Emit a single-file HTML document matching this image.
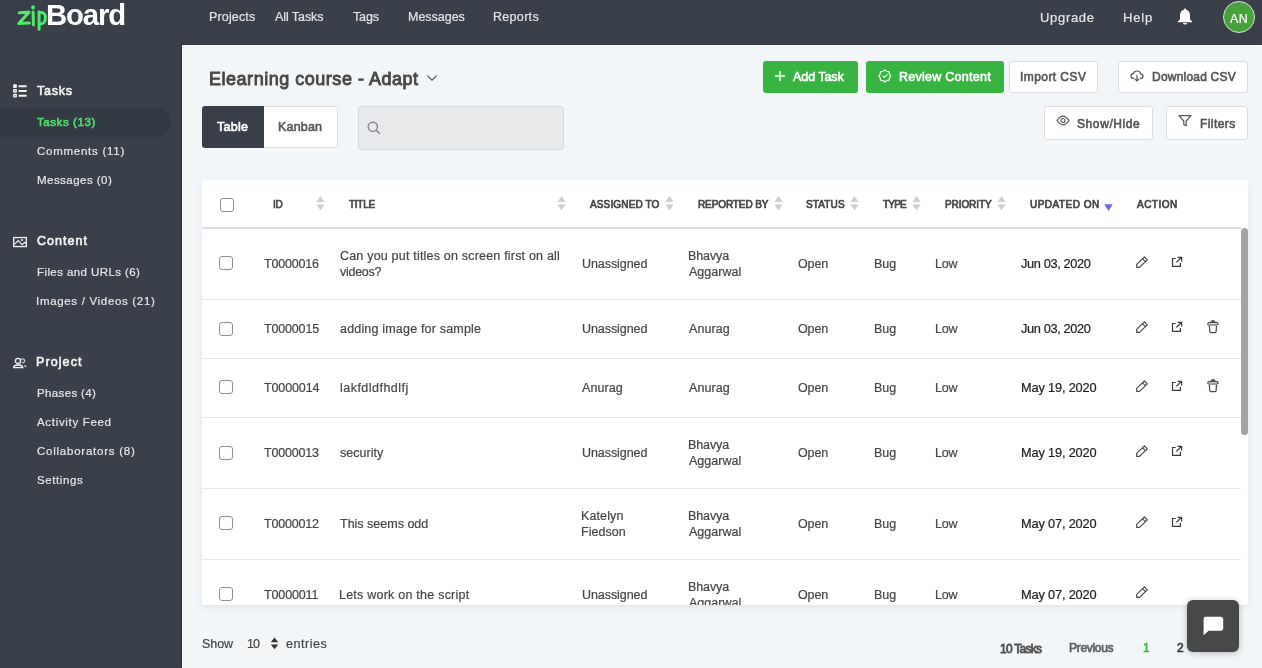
<!DOCTYPE html>
<html><head><meta charset="utf-8">
<style>
*{margin:0;padding:0;box-sizing:border-box}
html,body{width:1262px;height:668px;overflow:hidden}
body{position:relative;background:#3a404a;font-family:"Liberation Sans",sans-serif}
.t{position:absolute;white-space:nowrap;line-height:20px;will-change:transform}
.abs{position:absolute}
#main{position:absolute;left:182px;top:45px;width:1080px;height:623px;background:#f2f6f9;border-top:1px solid #fbfcfd;border-left:1px solid #fbfcfd;box-shadow:-1px -1px 0 #30343d}
.pill{position:absolute;left:0;top:108px;width:171px;height:29px;background:#343a43;border-radius:0 15px 15px 0}
.btn{position:absolute;border-radius:3px}
.gbtn{background:#37b441}
.wbtn{background:#fff;border:1px solid #dcdde0}
#card{position:absolute;left:202px;top:180px;width:1046px;height:425px;background:#fff;border-radius:4px 4px 4px 0;box-shadow:0 2px 6px rgba(0,0,0,0.07);overflow:hidden}
#rowclip{position:absolute;left:202px;top:229px;width:1046px;height:376px;overflow:hidden}
#rowinner{position:absolute;left:-202px;top:-229px;width:1262px;height:668px}
.sep{position:absolute;left:202px;width:1039px;height:1px;background:#e6e6e8}
.cb{position:absolute;width:14px;height:14px;border:1px solid #8f8f8f;border-radius:3px;background:#fff}
.ic{position:absolute}
.sort{position:absolute;top:196px;width:9px;height:15px}
</style></head><body>
<!-- logo -->
<svg class="abs" style="left:14px;top:2px" width="36" height="32" viewBox="0 0 36 32">
<g fill="none" stroke="#4cec6a" stroke-width="3" stroke-linecap="round" stroke-linejoin="round">
<path d="M5.3 10.8 L15 10.2 L4.8 21.6 L15.3 21.1"/>
<path d="M19.1 10 L19.4 23"/>
<path d="M25.1 9.8 L25.1 27.3"/>
<path d="M25.3 10.6 Q31.4 9.4 31.4 15.8 Q31.4 22 26.3 21.8"/>
</g>
<ellipse cx="19.1" cy="5.4" rx="1.9" ry="2.1" fill="#4cec6a"/>
</svg>
<div id="main"></div>
<div class="pill"></div>
<!-- sidebar icons -->
<svg class="abs" style="left:12px;top:83px" width="16" height="16" viewBox="0 0 16 16">
<g fill="#f2f2f2"><rect x="1.1" y="1.3" width="3.8" height="3.8" rx="0.8"/><rect x="1.1" y="6" width="3.8" height="3.8" rx="0.8"/><rect x="1.1" y="10.8" width="3.8" height="3.8" rx="0.8"/></g>
<g fill="#8a8d93"><rect x="2.4" y="7.2" width="1.2" height="1.4"/><rect x="2.4" y="12" width="1.2" height="1.4"/></g>
<path d="M6.6 3.2 H14.6 M6.6 7.9 H14.6 M6.6 12.7 H14.6" stroke="#f2f2f2" stroke-width="2"/></svg>
<svg class="abs" style="left:12px;top:235px" width="16" height="14" viewBox="0 0 16 14">
<g fill="none" stroke="#f2f2f2" stroke-width="1.3"><rect x="1.75" y="2.55" width="12.6" height="9"/><path d="M2.4 9.4 L6.3 5.6 L10.2 9.6 L12.6 7.3 L14.2 8.8" stroke-width="1.2"/></g><circle cx="10" cy="5" r="1.1" fill="#f2f2f2"/></svg>
<svg class="abs" style="left:12px;top:355px" width="16" height="14" viewBox="0 0 16 14">
<g fill="none" stroke="#f2f2f2" stroke-width="1.3"><circle cx="6" cy="5.9" r="2.6"/><path d="M1.6 12.6 Q1.8 10 6.2 10 Q10.6 10 10.8 12.6 Z"/><path d="M9.2 4.6 Q10.2 3.6 11.4 4 Q13.2 4.8 12.4 6.8 Q11.8 8 10 7.6" stroke="#c8c8c8"/></g>
<path d="M12.6 9.8 L15 11.8 H12.4 Z" fill="#f2f2f2"/></svg>

<!-- title chevron -->
<svg class="abs" style="left:426px;top:74px" width="12" height="8" viewBox="0 0 12 8"><path d="M1.4 1.6 L6 6.2 L10.6 1.6" fill="none" stroke="#555" stroke-width="1.3"/></svg>
<!-- toggle -->
<div class="abs" style="left:202px;top:106px;width:136px;height:42px;border-radius:3px;background:#fff;border:1px solid #dcdde0"></div>
<div class="abs" style="left:202px;top:106px;width:62px;height:42px;border-radius:3px 0 0 3px;background:#3a404a"></div>
<!-- search -->
<div class="abs" style="left:358px;top:106px;width:206px;height:44px;border-radius:3px;background:#e8e9eb;border:1px solid #d9dadd"></div>
<svg class="abs" style="left:367px;top:121px" width="14" height="14" viewBox="0 0 14 14"><circle cx="5.8" cy="5.8" r="4.6" fill="none" stroke="#85858f" stroke-width="1.4"/><path d="M9.2 9.2 L12.8 12.8" stroke="#85858f" stroke-width="1.6"/></svg>
<!-- buttons -->
<div class="btn gbtn" style="left:763px;top:61px;width:95px;height:32px"></div>
<div class="btn gbtn" style="left:866px;top:61px;width:138px;height:32px"></div>
<div class="btn wbtn" style="left:1009px;top:61px;width:89px;height:32px"></div>
<div class="btn wbtn" style="left:1118px;top:61px;width:130px;height:32px"></div>
<div class="btn wbtn" style="left:1044px;top:106px;width:109px;height:34px"></div>
<div class="btn wbtn" style="left:1166px;top:106px;width:82px;height:34px"></div>
<svg class="abs" style="left:774px;top:70px" width="12" height="12" viewBox="0 0 12 12"><path d="M6 1 V11 M1 6 H11" stroke="#fff" stroke-width="1.4"/></svg>
<svg class="abs" style="left:877px;top:68px" width="16" height="16" viewBox="0 0 16 16"><path d="M7.80 1.90 L9.71 3.28 L12.04 3.66 L12.42 5.99 L13.80 7.90 L12.42 9.81 L12.04 12.14 L9.71 12.52 L7.80 13.90 L5.89 12.52 L3.56 12.14 L3.18 9.81 L1.80 7.90 L3.18 5.99 L3.56 3.66 L5.89 3.28 Z" fill="none" stroke="#fff" stroke-width="1.2" stroke-linejoin="round"/><path d="M5.6 7.6 L7.4 9.5 L10.5 6.4" fill="none" stroke="#fff" stroke-width="1.2"/></svg>
<svg class="abs" style="left:1130px;top:70px" width="14" height="12" viewBox="0 0 14 12"><path d="M4.2 8.4 H3.4 Q1 8.4 1 6 Q1 3.8 3.3 3.6 Q4 1 7 1 Q10 1 10.6 3.8 Q13 4 13 6.2 Q13 8.4 10.6 8.4 H9.8" fill="none" stroke="#555" stroke-width="1.2"/><path d="M7 5 V11 M4.8 8.8 L7 11 L9.2 8.8" fill="none" stroke="#555" stroke-width="1.2"/></svg>
<svg class="abs" style="left:1056px;top:115px" width="14" height="11" viewBox="0 0 14 11"><path d="M1 5.5 Q4 1.2 7 1.2 Q10 1.2 13 5.5 Q10 9.8 7 9.8 Q4 9.8 1 5.5 Z" fill="none" stroke="#555" stroke-width="1.2"/><circle cx="7" cy="5.5" r="2" fill="none" stroke="#555" stroke-width="1.2"/></svg>
<svg class="abs" style="left:1178px;top:115px" width="14" height="12" viewBox="0 0 14 12"><path d="M1 0.6 H13 L8.2 6 V10.8 L5.8 9.6 V6 Z" fill="none" stroke="#555" stroke-width="1.2" stroke-linejoin="round"/></svg>

<!-- topbar right icons -->
<svg class="abs" style="left:1177px;top:8px" width="16" height="17" viewBox="0 0 16 17"><path d="M8 0.6 Q9.2 0.6 9.2 1.8 Q13 2.8 13 7.4 V11.6 L15.2 13.6 V14.2 H0.8 V13.6 L3 11.6 V7.4 Q3 2.8 6.8 1.8 Q6.8 0.6 8 0.6 Z" fill="#fff"/><path d="M6 15 Q6 16.6 8 16.6 Q10 16.6 10 15 Z" fill="#fff"/></svg>
<div class="abs" style="left:1223px;top:1px;width:32px;height:32px;border-radius:50%;background:#47a23d;border:1px solid #dcdcdc"></div>

<div id="card"></div>
<!-- header -->
<div class="abs" style="left:202px;top:227px;width:1039px;height:2px;background:#dddbe9"></div>
<div class="cb" style="left:220px;top:198px"></div>
<svg class="sort" style="left:316px"><path d="M4.5 0 L8.6 6 H0.4 Z M0.4 8.6 H8.6 L4.5 14.6 Z" fill="#d0d0d0"/></svg>
<svg class="sort" style="left:557px"><path d="M4.5 0 L8.6 6 H0.4 Z M0.4 8.6 H8.6 L4.5 14.6 Z" fill="#d0d0d0"/></svg>
<svg class="sort" style="left:665px"><path d="M4.5 0 L8.6 6 H0.4 Z M0.4 8.6 H8.6 L4.5 14.6 Z" fill="#d0d0d0"/></svg>
<svg class="sort" style="left:774px"><path d="M4.5 0 L8.6 6 H0.4 Z M0.4 8.6 H8.6 L4.5 14.6 Z" fill="#d0d0d0"/></svg>
<svg class="sort" style="left:850px"><path d="M4.5 0 L8.6 6 H0.4 Z M0.4 8.6 H8.6 L4.5 14.6 Z" fill="#d0d0d0"/></svg>
<svg class="sort" style="left:912px"><path d="M4.5 0 L8.6 6 H0.4 Z M0.4 8.6 H8.6 L4.5 14.6 Z" fill="#d0d0d0"/></svg>
<svg class="sort" style="left:997px"><path d="M4.5 0 L8.6 6 H0.4 Z M0.4 8.6 H8.6 L4.5 14.6 Z" fill="#d0d0d0"/></svg>
<svg class="abs" style="left:1104px;top:203px" width="9" height="9" viewBox="0 0 9 9"><path d="M0.3 1.2 H8.7 L4.5 8.1 Z" fill="#6b68e0"/></svg>
<div id="rowclip"><div id="rowinner">
<div class="cb" style="left:219px;top:256px"></div>
<div class="sep" style="top:299px"></div>
<svg class="ic" style="left:1130px;top:254px" width="95" height="20" viewBox="0 0 95 20"><path d="M6.7 13.3 L6.7 10.4 L14.4 2.9 L17.3 5.8 L9.5 13.3 Z M12.6 4.8 L15.2 7.4" fill="none" stroke="#444" stroke-width="1.15" stroke-linejoin="round"/><path d="M45.7 4.5 H42.5 V12.3 H50.4 V9 M47.5 3.3 H51.6 V7.5 M51.4 3.5 L46.3 8.4" fill="none" stroke="#3a3a3a" stroke-width="1.2"/></svg>
<div class="cb" style="left:219px;top:322px"></div>
<div class="sep" style="top:358px"></div>
<svg class="ic" style="left:1130px;top:319px" width="95" height="20" viewBox="0 0 95 20"><path d="M6.7 13.3 L6.7 10.4 L14.4 2.9 L17.3 5.8 L9.5 13.3 Z M12.6 4.8 L15.2 7.4" fill="none" stroke="#444" stroke-width="1.15" stroke-linejoin="round"/><path d="M45.7 4.5 H42.5 V12.3 H50.4 V9 M47.5 3.3 H51.6 V7.5 M51.4 3.5 L46.3 8.4" fill="none" stroke="#3a3a3a" stroke-width="1.2"/><path d="M80.3 3.6 Q80.6 0.9 83 0.9 Q85.4 0.9 85.7 3.6 Z" fill="#5a5a5a"/><rect x="77.8" y="3.7" width="10.3" height="2.3" rx="1.1" fill="#f4f4f4" stroke="#4a4a4a" stroke-width="1.2"/><path d="M79.3 6.6 L79.9 13 Q80 13.6 80.6 13.6 H85.4 Q86 13.6 86.1 13 L86.5 6.6" fill="none" stroke="#4a4a4a" stroke-width="1.2"/></svg>
<div class="cb" style="left:219px;top:380px"></div>
<div class="sep" style="top:417px"></div>
<svg class="ic" style="left:1130px;top:378px" width="95" height="20" viewBox="0 0 95 20"><path d="M6.7 13.3 L6.7 10.4 L14.4 2.9 L17.3 5.8 L9.5 13.3 Z M12.6 4.8 L15.2 7.4" fill="none" stroke="#444" stroke-width="1.15" stroke-linejoin="round"/><path d="M45.7 4.5 H42.5 V12.3 H50.4 V9 M47.5 3.3 H51.6 V7.5 M51.4 3.5 L46.3 8.4" fill="none" stroke="#3a3a3a" stroke-width="1.2"/><path d="M80.3 3.6 Q80.6 0.9 83 0.9 Q85.4 0.9 85.7 3.6 Z" fill="#5a5a5a"/><rect x="77.8" y="3.7" width="10.3" height="2.3" rx="1.1" fill="#f4f4f4" stroke="#4a4a4a" stroke-width="1.2"/><path d="M79.3 6.6 L79.9 13 Q80 13.6 80.6 13.6 H85.4 Q86 13.6 86.1 13 L86.5 6.6" fill="none" stroke="#4a4a4a" stroke-width="1.2"/></svg>
<div class="cb" style="left:219px;top:446px"></div>
<div class="sep" style="top:488px"></div>
<svg class="ic" style="left:1130px;top:443px" width="95" height="20" viewBox="0 0 95 20"><path d="M6.7 13.3 L6.7 10.4 L14.4 2.9 L17.3 5.8 L9.5 13.3 Z M12.6 4.8 L15.2 7.4" fill="none" stroke="#444" stroke-width="1.15" stroke-linejoin="round"/><path d="M45.7 4.5 H42.5 V12.3 H50.4 V9 M47.5 3.3 H51.6 V7.5 M51.4 3.5 L46.3 8.4" fill="none" stroke="#3a3a3a" stroke-width="1.2"/></svg>
<div class="cb" style="left:219px;top:516px"></div>
<div class="sep" style="top:559px"></div>
<svg class="ic" style="left:1130px;top:514px" width="95" height="20" viewBox="0 0 95 20"><path d="M6.7 13.3 L6.7 10.4 L14.4 2.9 L17.3 5.8 L9.5 13.3 Z M12.6 4.8 L15.2 7.4" fill="none" stroke="#444" stroke-width="1.15" stroke-linejoin="round"/><path d="M45.7 4.5 H42.5 V12.3 H50.4 V9 M47.5 3.3 H51.6 V7.5 M51.4 3.5 L46.3 8.4" fill="none" stroke="#3a3a3a" stroke-width="1.2"/></svg>
<div class="cb" style="left:219px;top:587px"></div>
<svg class="ic" style="left:1130px;top:584px" width="95" height="20" viewBox="0 0 95 20"><path d="M6.7 13.3 L6.7 10.4 L14.4 2.9 L17.3 5.8 L9.5 13.3 Z M12.6 4.8 L15.2 7.4" fill="none" stroke="#444" stroke-width="1.15" stroke-linejoin="round"/></svg>
<div class="t" style="left:264.30px;top:254.00px;font-size:12.5px;font-weight:400;-webkit-text-stroke:0.20px #454545;color:#454545;letter-spacing:-0.192px">T0000016</div>
<div class="t" style="left:340.40px;top:246.00px;font-size:12.5px;font-weight:400;-webkit-text-stroke:0.20px #454545;color:#454545;letter-spacing:0.197px">Can you put titles on screen first on all</div>
<div class="t" style="left:340.40px;top:262.00px;font-size:12.5px;font-weight:400;-webkit-text-stroke:0.20px #454545;color:#454545;letter-spacing:-0.273px">videos?</div>
<div class="t" style="left:581.50px;top:254.00px;font-size:12.5px;font-weight:400;-webkit-text-stroke:0.20px #454545;color:#454545;letter-spacing:-0.063px">Unassigned</div>
<div class="t" style="left:688.30px;top:246.00px;font-size:12.5px;font-weight:400;-webkit-text-stroke:0.20px #454545;color:#454545;letter-spacing:-0.108px">Bhavya</div>
<div class="t" style="left:689.30px;top:262.00px;font-size:12.5px;font-weight:400;-webkit-text-stroke:0.20px #454545;color:#454545;letter-spacing:0.024px">Aggarwal</div>
<div class="t" style="left:798.40px;top:254.00px;font-size:12.5px;font-weight:400;-webkit-text-stroke:0.20px #454545;color:#454545;letter-spacing:-0.109px">Open</div>
<div class="t" style="left:873.60px;top:254.00px;font-size:12.5px;font-weight:400;-webkit-text-stroke:0.20px #454545;color:#454545;letter-spacing:-0.045px">Bug</div>
<div class="t" style="left:935.40px;top:254.00px;font-size:12.5px;font-weight:400;-webkit-text-stroke:0.20px #454545;color:#454545;letter-spacing:-0.252px">Low</div>
<div class="t" style="left:1020.50px;top:254.00px;font-size:12.8px;font-weight:400;-webkit-text-stroke:0.20px #222222;color:#222222;letter-spacing:-0.380px">Jun 03, 2020</div>
<div class="t" style="left:264.30px;top:319.00px;font-size:12.5px;font-weight:400;-webkit-text-stroke:0.20px #454545;color:#454545;letter-spacing:-0.164px">T0000015</div>
<div class="t" style="left:340.40px;top:319.00px;font-size:12.5px;font-weight:400;-webkit-text-stroke:0.20px #454545;color:#454545;letter-spacing:0.185px">adding image for sample</div>
<div class="t" style="left:581.50px;top:319.00px;font-size:12.5px;font-weight:400;-webkit-text-stroke:0.20px #454545;color:#454545;letter-spacing:-0.063px">Unassigned</div>
<div class="t" style="left:689.30px;top:319.00px;font-size:12.5px;font-weight:400;-webkit-text-stroke:0.20px #454545;color:#454545;letter-spacing:0.069px">Anurag</div>
<div class="t" style="left:798.40px;top:319.00px;font-size:12.5px;font-weight:400;-webkit-text-stroke:0.20px #454545;color:#454545;letter-spacing:-0.109px">Open</div>
<div class="t" style="left:873.60px;top:319.00px;font-size:12.5px;font-weight:400;-webkit-text-stroke:0.20px #454545;color:#454545;letter-spacing:-0.045px">Bug</div>
<div class="t" style="left:935.40px;top:319.00px;font-size:12.5px;font-weight:400;-webkit-text-stroke:0.20px #454545;color:#454545;letter-spacing:-0.252px">Low</div>
<div class="t" style="left:1020.50px;top:319.00px;font-size:12.8px;font-weight:400;-webkit-text-stroke:0.20px #222222;color:#222222;letter-spacing:-0.380px">Jun 03, 2020</div>
<div class="t" style="left:264.30px;top:378.00px;font-size:12.5px;font-weight:400;-webkit-text-stroke:0.20px #454545;color:#454545;letter-spacing:-0.121px">T0000014</div>
<div class="t" style="left:340.40px;top:378.00px;font-size:12.5px;font-weight:400;-webkit-text-stroke:0.20px #454545;color:#454545;letter-spacing:0.478px">lakfdldfhdlfj</div>
<div class="t" style="left:581.50px;top:378.00px;font-size:12.5px;font-weight:400;-webkit-text-stroke:0.20px #454545;color:#454545;letter-spacing:0.069px">Anurag</div>
<div class="t" style="left:689.30px;top:378.00px;font-size:12.5px;font-weight:400;-webkit-text-stroke:0.20px #454545;color:#454545;letter-spacing:0.069px">Anurag</div>
<div class="t" style="left:798.40px;top:378.00px;font-size:12.5px;font-weight:400;-webkit-text-stroke:0.20px #454545;color:#454545;letter-spacing:-0.109px">Open</div>
<div class="t" style="left:873.60px;top:378.00px;font-size:12.5px;font-weight:400;-webkit-text-stroke:0.20px #454545;color:#454545;letter-spacing:-0.045px">Bug</div>
<div class="t" style="left:935.40px;top:378.00px;font-size:12.5px;font-weight:400;-webkit-text-stroke:0.20px #454545;color:#454545;letter-spacing:-0.252px">Low</div>
<div class="t" style="left:1020.50px;top:378.00px;font-size:12.8px;font-weight:400;-webkit-text-stroke:0.20px #222222;color:#222222;letter-spacing:-0.175px">May 19, 2020</div>
<div class="t" style="left:264.30px;top:443.00px;font-size:12.5px;font-weight:400;-webkit-text-stroke:0.20px #454545;color:#454545;letter-spacing:-0.192px">T0000013</div>
<div class="t" style="left:340.40px;top:443.00px;font-size:12.5px;font-weight:400;-webkit-text-stroke:0.20px #454545;color:#454545;letter-spacing:0.026px">security</div>
<div class="t" style="left:581.50px;top:443.00px;font-size:12.5px;font-weight:400;-webkit-text-stroke:0.20px #454545;color:#454545;letter-spacing:-0.063px">Unassigned</div>
<div class="t" style="left:688.30px;top:435.00px;font-size:12.5px;font-weight:400;-webkit-text-stroke:0.20px #454545;color:#454545;letter-spacing:-0.108px">Bhavya</div>
<div class="t" style="left:689.30px;top:451.00px;font-size:12.5px;font-weight:400;-webkit-text-stroke:0.20px #454545;color:#454545;letter-spacing:0.024px">Aggarwal</div>
<div class="t" style="left:798.40px;top:443.00px;font-size:12.5px;font-weight:400;-webkit-text-stroke:0.20px #454545;color:#454545;letter-spacing:-0.109px">Open</div>
<div class="t" style="left:873.60px;top:443.00px;font-size:12.5px;font-weight:400;-webkit-text-stroke:0.20px #454545;color:#454545;letter-spacing:-0.045px">Bug</div>
<div class="t" style="left:935.40px;top:443.00px;font-size:12.5px;font-weight:400;-webkit-text-stroke:0.20px #454545;color:#454545;letter-spacing:-0.252px">Low</div>
<div class="t" style="left:1020.50px;top:443.00px;font-size:12.8px;font-weight:400;-webkit-text-stroke:0.20px #222222;color:#222222;letter-spacing:-0.175px">May 19, 2020</div>
<div class="t" style="left:264.30px;top:514.00px;font-size:12.5px;font-weight:400;-webkit-text-stroke:0.20px #454545;color:#454545;letter-spacing:-0.192px">T0000012</div>
<div class="t" style="left:340.40px;top:514.00px;font-size:12.5px;font-weight:400;-webkit-text-stroke:0.20px #454545;color:#454545;letter-spacing:0.001px">This seems odd</div>
<div class="t" style="left:580.50px;top:506.00px;font-size:12.5px;font-weight:400;-webkit-text-stroke:0.20px #454545;color:#454545;letter-spacing:0.110px">Katelyn</div>
<div class="t" style="left:580.50px;top:522.00px;font-size:12.5px;font-weight:400;-webkit-text-stroke:0.20px #454545;color:#454545;letter-spacing:0.030px">Fiedson</div>
<div class="t" style="left:688.30px;top:506.00px;font-size:12.5px;font-weight:400;-webkit-text-stroke:0.20px #454545;color:#454545;letter-spacing:-0.108px">Bhavya</div>
<div class="t" style="left:689.30px;top:522.00px;font-size:12.5px;font-weight:400;-webkit-text-stroke:0.20px #454545;color:#454545;letter-spacing:0.024px">Aggarwal</div>
<div class="t" style="left:798.40px;top:514.00px;font-size:12.5px;font-weight:400;-webkit-text-stroke:0.20px #454545;color:#454545;letter-spacing:-0.109px">Open</div>
<div class="t" style="left:873.60px;top:514.00px;font-size:12.5px;font-weight:400;-webkit-text-stroke:0.20px #454545;color:#454545;letter-spacing:-0.045px">Bug</div>
<div class="t" style="left:935.40px;top:514.00px;font-size:12.5px;font-weight:400;-webkit-text-stroke:0.20px #454545;color:#454545;letter-spacing:-0.252px">Low</div>
<div class="t" style="left:1020.50px;top:514.00px;font-size:12.8px;font-weight:400;-webkit-text-stroke:0.20px #222222;color:#222222;letter-spacing:-0.175px">May 07, 2020</div>
<div class="t" style="left:264.30px;top:585.00px;font-size:12.5px;font-weight:400;-webkit-text-stroke:0.20px #454545;color:#454545;letter-spacing:-0.131px">T0000011</div>
<div class="t" style="left:339.40px;top:585.00px;font-size:12.5px;font-weight:400;-webkit-text-stroke:0.20px #454545;color:#454545;letter-spacing:0.233px">Lets work on the script</div>
<div class="t" style="left:581.50px;top:585.00px;font-size:12.5px;font-weight:400;-webkit-text-stroke:0.20px #454545;color:#454545;letter-spacing:-0.063px">Unassigned</div>
<div class="t" style="left:688.30px;top:577.00px;font-size:12.5px;font-weight:400;-webkit-text-stroke:0.20px #454545;color:#454545;letter-spacing:-0.108px">Bhavya</div>
<div class="t" style="left:689.30px;top:593.00px;font-size:12.5px;font-weight:400;-webkit-text-stroke:0.20px #454545;color:#454545;letter-spacing:0.024px">Aggarwal</div>
<div class="t" style="left:798.40px;top:585.00px;font-size:12.5px;font-weight:400;-webkit-text-stroke:0.20px #454545;color:#454545;letter-spacing:-0.109px">Open</div>
<div class="t" style="left:873.60px;top:585.00px;font-size:12.5px;font-weight:400;-webkit-text-stroke:0.20px #454545;color:#454545;letter-spacing:-0.045px">Bug</div>
<div class="t" style="left:935.40px;top:585.00px;font-size:12.5px;font-weight:400;-webkit-text-stroke:0.20px #454545;color:#454545;letter-spacing:-0.252px">Low</div>
<div class="t" style="left:1020.50px;top:585.00px;font-size:12.8px;font-weight:400;-webkit-text-stroke:0.20px #222222;color:#222222;letter-spacing:-0.175px">May 07, 2020</div>
</div></div>
<!-- scrollbar -->
<div class="abs" style="left:1241px;top:228px;width:7px;height:207px;border-radius:4px;background:#a3a3a3"></div>

<!-- footer -->
<div class="abs" style="left:238px;top:633px;width:44px;height:21px;border-radius:4px;background:#f4f5f7"></div>
<svg class="abs" style="left:270px;top:637px" width="9" height="13" viewBox="0 0 9 13"><path d="M4.5 0.5 L8.2 5.2 H0.8 Z M0.8 7.4 H8.2 L4.5 12.2 Z" fill="#333"/></svg>
<div class="t" style="left:208.50px;top:7.00px;font-size:12.5px;font-weight:400;-webkit-text-stroke:0.20px #e4e5e7;color:#e4e5e7;letter-spacing:0.157px">Projects</div>
<div class="t" style="left:274.50px;top:7.00px;font-size:12.5px;font-weight:400;-webkit-text-stroke:0.20px #e4e5e7;color:#e4e5e7;letter-spacing:-0.071px">All Tasks</div>
<div class="t" style="left:353.00px;top:7.00px;font-size:12.5px;font-weight:400;-webkit-text-stroke:0.20px #e4e5e7;color:#e4e5e7;letter-spacing:-0.151px">Tags</div>
<div class="t" style="left:407.50px;top:7.00px;font-size:12.5px;font-weight:400;-webkit-text-stroke:0.20px #e4e5e7;color:#e4e5e7;letter-spacing:-0.017px">Messages</div>
<div class="t" style="left:492.80px;top:7.00px;font-size:12.5px;font-weight:400;-webkit-text-stroke:0.20px #e4e5e7;color:#e4e5e7;letter-spacing:0.314px">Reports</div>
<div class="t" style="left:1039.70px;top:8.00px;font-size:13px;font-weight:400;-webkit-text-stroke:0.20px #e4e5e7;color:#e4e5e7;letter-spacing:0.677px">Upgrade</div>
<div class="t" style="left:1122.75px;top:8.00px;font-size:13px;font-weight:400;-webkit-text-stroke:0.20px #e4e5e7;color:#e4e5e7;letter-spacing:0.831px">Help</div>
<div class="t" style="left:1230.00px;top:9.00px;font-size:12.5px;font-weight:400;-webkit-text-stroke:0.20px #ffffff;color:#ffffff;letter-spacing:0.463px">AN</div>
<div class="t" style="left:46.20px;top:5.00px;font-size:29.3px;font-weight:700;color:#ffffff;letter-spacing:-1.112px">Board</div>
<div class="t" style="left:37.30px;top:81.00px;font-size:12.5px;font-weight:400;-webkit-text-stroke:0.60px #f4f4f4;color:#f4f4f4;letter-spacing:0.775px">Tasks</div>
<div class="t" style="left:37.30px;top:112.00px;font-size:11.5px;font-weight:400;-webkit-text-stroke:0.60px #4fe06d;color:#4fe06d;letter-spacing:0.576px">Tasks (13)</div>
<div class="t" style="left:37.00px;top:141.00px;font-size:11.5px;font-weight:400;-webkit-text-stroke:0.20px #e6e7e9;color:#e6e7e9;letter-spacing:0.745px">Comments (11)</div>
<div class="t" style="left:37.00px;top:170.00px;font-size:11.5px;font-weight:400;-webkit-text-stroke:0.20px #e6e7e9;color:#e6e7e9;letter-spacing:0.461px">Messages (0)</div>
<div class="t" style="left:37.30px;top:231.00px;font-size:12.5px;font-weight:400;-webkit-text-stroke:0.60px #f4f4f4;color:#f4f4f4;letter-spacing:1.015px">Content</div>
<div class="t" style="left:37.00px;top:262.00px;font-size:11.5px;font-weight:400;-webkit-text-stroke:0.20px #e6e7e9;color:#e6e7e9;letter-spacing:0.410px">Files and URLs (6)</div>
<div class="t" style="left:36.00px;top:291.00px;font-size:11.5px;font-weight:400;-webkit-text-stroke:0.20px #e6e7e9;color:#e6e7e9;letter-spacing:0.681px">Images / Videos (21)</div>
<div class="t" style="left:36.30px;top:352.00px;font-size:12.5px;font-weight:400;-webkit-text-stroke:0.60px #f4f4f4;color:#f4f4f4;letter-spacing:1.095px">Project</div>
<div class="t" style="left:37.00px;top:383.00px;font-size:11.5px;font-weight:400;-webkit-text-stroke:0.20px #e6e7e9;color:#e6e7e9;letter-spacing:0.358px">Phases (4)</div>
<div class="t" style="left:37.00px;top:412.00px;font-size:11.5px;font-weight:400;-webkit-text-stroke:0.20px #e6e7e9;color:#e6e7e9;letter-spacing:0.681px">Activity Feed</div>
<div class="t" style="left:37.00px;top:441.00px;font-size:11.5px;font-weight:400;-webkit-text-stroke:0.20px #e6e7e9;color:#e6e7e9;letter-spacing:0.762px">Collaborators (8)</div>
<div class="t" style="left:37.00px;top:470.00px;font-size:11.5px;font-weight:400;-webkit-text-stroke:0.20px #e6e7e9;color:#e6e7e9;letter-spacing:0.600px">Settings</div>
<div class="t" style="left:209.35px;top:69.00px;font-size:18px;font-weight:400;-webkit-text-stroke:0.90px #4a4846;color:#4a4846;letter-spacing:0.521px">Elearning course - Adapt</div>
<div class="t" style="left:217.30px;top:117.00px;font-size:12.5px;font-weight:400;-webkit-text-stroke:0.60px #ffffff;color:#ffffff;letter-spacing:0.292px">Table</div>
<div class="t" style="left:278.10px;top:117.00px;font-size:12.5px;font-weight:400;-webkit-text-stroke:0.60px #58585a;color:#58585a;letter-spacing:0.171px">Kanban</div>
<div class="t" style="left:793.30px;top:67.00px;font-size:12.5px;font-weight:400;-webkit-text-stroke:0.60px #ffffff;color:#ffffff;letter-spacing:-0.067px">Add Task</div>
<div class="t" style="left:899.30px;top:67.00px;font-size:12.5px;font-weight:400;-webkit-text-stroke:0.60px #ffffff;color:#ffffff;letter-spacing:0.264px">Review Content</div>
<div class="t" style="left:1020.10px;top:67.00px;font-size:12px;font-weight:400;-webkit-text-stroke:0.60px #555555;color:#555555;letter-spacing:0.432px">Import CSV</div>
<div class="t" style="left:1151.80px;top:67.00px;font-size:12px;font-weight:400;-webkit-text-stroke:0.60px #555555;color:#555555;letter-spacing:0.212px">Download CSV</div>
<div class="t" style="left:1077.10px;top:114.00px;font-size:12px;font-weight:400;-webkit-text-stroke:0.60px #555555;color:#555555;letter-spacing:0.593px">Show/Hide</div>
<div class="t" style="left:1200.00px;top:114.00px;font-size:12px;font-weight:400;-webkit-text-stroke:0.60px #555555;color:#555555;letter-spacing:0.422px">Filters</div>
<div class="t" style="left:273.05px;top:195.00px;font-size:10px;font-weight:400;-webkit-text-stroke:0.70px #474747;color:#474747;letter-spacing:-0.378px">ID</div>
<div class="t" style="left:349.15px;top:195.00px;font-size:10px;font-weight:400;-webkit-text-stroke:0.70px #474747;color:#474747;letter-spacing:-0.264px">TITLE</div>
<div class="t" style="left:589.95px;top:195.00px;font-size:10px;font-weight:400;-webkit-text-stroke:0.70px #474747;color:#474747;letter-spacing:0.141px">ASSIGNED TO</div>
<div class="t" style="left:697.95px;top:195.00px;font-size:10px;font-weight:400;-webkit-text-stroke:0.70px #474747;color:#474747;letter-spacing:-0.103px">REPORTED BY</div>
<div class="t" style="left:806.25px;top:195.00px;font-size:10px;font-weight:400;-webkit-text-stroke:0.70px #474747;color:#474747;letter-spacing:0.121px">STATUS</div>
<div class="t" style="left:882.95px;top:195.00px;font-size:10px;font-weight:400;-webkit-text-stroke:0.70px #474747;color:#474747;letter-spacing:-0.816px">TYPE</div>
<div class="t" style="left:945.15px;top:195.00px;font-size:10px;font-weight:400;-webkit-text-stroke:0.70px #474747;color:#474747;letter-spacing:-0.094px">PRIORITY</div>
<div class="t" style="left:1029.95px;top:195.00px;font-size:10px;font-weight:400;-webkit-text-stroke:0.70px #474747;color:#474747;letter-spacing:0.489px">UPDATED ON</div>
<div class="t" style="left:1137.15px;top:195.00px;font-size:10px;font-weight:400;-webkit-text-stroke:0.70px #474747;color:#474747;letter-spacing:0.469px">ACTION</div>
<div class="t" style="left:202.40px;top:634.00px;font-size:12.5px;font-weight:400;-webkit-text-stroke:0.20px #444444;color:#444444;letter-spacing:-0.080px">Show</div>
<div class="t" style="left:246.70px;top:634.00px;font-size:12.5px;font-weight:400;-webkit-text-stroke:0.20px #444444;color:#444444;letter-spacing:-0.852px">10</div>
<div class="t" style="left:285.60px;top:634.00px;font-size:12.5px;font-weight:400;-webkit-text-stroke:0.20px #444444;color:#444444;letter-spacing:0.539px">entries</div>
<div class="t" style="left:1000.10px;top:639.00px;font-size:12px;font-weight:400;-webkit-text-stroke:0.80px #505050;color:#505050;letter-spacing:-0.736px">10 Tasks</div>
<div class="t" style="left:1069.05px;top:638.00px;font-size:12px;font-weight:400;-webkit-text-stroke:0.70px #606060;color:#606060;letter-spacing:-0.312px">Previous</div>
<div class="t" style="left:1143.30px;top:638.00px;font-size:12px;font-weight:400;-webkit-text-stroke:0.60px #3cb54a;color:#3cb54a;letter-spacing:-2.800px">1</div>
<div class="t" style="left:1176.70px;top:638.00px;font-size:12px;font-weight:400;-webkit-text-stroke:0.60px #333333;color:#333333;letter-spacing:-2.200px">2</div>
<!-- chat widget -->
<div class="abs" style="left:1187px;top:600px;width:52px;height:52px;border-radius:6px;background:#474948;box-shadow:0 1px 6px rgba(0,0,0,0.25)"></div>
<svg class="abs" style="left:1202px;top:616px" width="22" height="20" viewBox="0 0 22 20"><path d="M3.6 0.8 H18.4 Q21.2 0.8 21.2 3.6 V11.9 Q21.2 14.7 18.4 14.7 H6.6 L1.6 19.2 V3.6 Q1.6 0.8 3.6 0.8 Z" fill="#fff"/></svg>
</body></html>
